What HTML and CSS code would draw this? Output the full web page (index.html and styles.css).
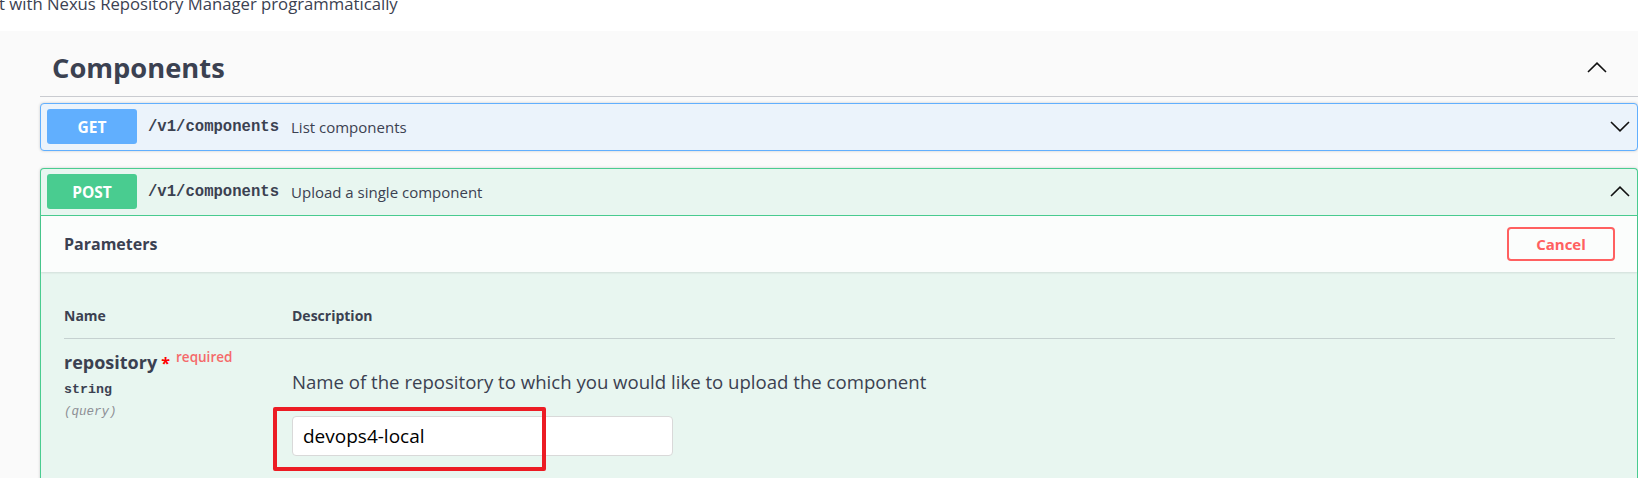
FILE: index.html
```html
<!DOCTYPE html>
<html>
<head>
<meta charset="utf-8">
<link rel="stylesheet" href="styles.css">
</head>
<body>
<div class="topbar"><p class="info-desc">t with Nexus Repository Manager programmatically</p></div>
<div class="main">
  <div class="tag-header">
    <h3 class="tag-title">Components</h3>
    <svg class="chev" width="20" height="11" viewBox="0 0 20 11"><polyline points="1,10 10,1.2 19,10"/></svg>
  </div>

  <div class="opblock get">
    <div class="summary">
      <span class="method">GET</span>
      <span class="path">/v1/components</span>
      <span class="sdesc">List components</span>
      <svg class="chev op-chev" width="20" height="11" viewBox="0 0 20 11"><polyline points="1,1 10,9.8 19,1"/></svg>
    </div>
  </div>

  <div class="opblock post">
    <div class="summary open">
      <span class="method">POST</span>
      <span class="path">/v1/components</span>
      <span class="sdesc">Upload a single component</span>
      <svg class="chev op-chev" width="20" height="11" viewBox="0 0 20 11"><polyline points="1,10 10,1.2 19,10"/></svg>
    </div>
    <div class="section-header">
      <h4 class="sec-title">Parameters</h4>
      <button class="cancel">Cancel</button>
    </div>
    <div class="table">
      <div class="thead">
        <div class="col-name">Name</div>
        <div class="col-desc">Description</div>
      </div>
      <div class="row">
        <div class="col-name">
          <div class="pname">repository<span class="star">&nbsp;*</span><span class="req">required</span></div>
          <div class="ptype">string</div>
          <div class="pin">(query)</div>
        </div>
        <div class="col-desc">
          <p class="pdesc">Name of the repository to which you would like to upload the component</p>
          <div class="field">
            <input class="inp" type="text" value="devops4-local">
            <div class="mark"></div>
          </div>
        </div>
      </div>
    </div>
  </div>
</div>
</body>
</html>
```

FILE: styles.css
```css
html, body {
  margin: 0;
  padding: 0;
  background: #fafafa;
  font-family: "Open Sans", "Liberation Sans", sans-serif;
  color: #3b4151;
  overflow: hidden;
}
.topbar {
  height: 31px;
  background: #ffffff;
  overflow: hidden;
}
.info-desc {
  margin: -8px 0 0 -1px;
  font-size: 16.7px;
  line-height: 23px;
  white-space: nowrap;
}
.main {
  padding-left: 40px;
  padding-top: 0;
  background: #fafafa;
  height: 447px;
  overflow: hidden;
}
.tag-header {
  display: flex;
  align-items: center;
  justify-content: space-between;
  height: 57px;
  padding: 8px 31px 0 12px;
  border-bottom: 1px solid #c9cbd0;
}
.tag-title {
  margin: 0;
  font-size: 27.3px;
  font-weight: 700;
  line-height: 36px;
}
.chev polyline {
  fill: none;
  stroke: #111;
  stroke-width: 1.6;
}
.opblock {
  border: 1px solid;
  border-radius: 4px;
  box-shadow: 0 0 3px rgba(0,0,0,.19);
}
.opblock.get {
  margin-top: 6px;
  background: #ebf3fb;
  border-color: #61affe;
}
.opblock.post {
  margin-top: 17px;
  background: #e8f6f0;
  border-color: #49cc90;
  border-bottom: none;
  border-radius: 4px 4px 0 0;
}
.summary {
  display: flex;
  align-items: center;
  padding: 5px 7px 6px 6px;
}
.summary.open {
  border-bottom: 1px solid #49cc90;
}
.method {
  width: 90px;
  height: 35px;
  border-radius: 3px;
  color: #fff;
  font-weight: 700;
  font-size: 15.5px;
  display: flex;
  align-items: center;
  justify-content: center;
}
.get .method { background: #61affe; }
.post .method { background: #49cc90; }
.path {
  margin-left: 11px;
  font-family: "Liberation Mono", monospace;
  font-weight: 700;
  font-size: 15.6px;
}
.sdesc {
  margin-left: 12px;
  font-size: 15px;
}
.op-chev {
  margin-left: auto;
}
.section-header {
  display: flex;
  align-items: center;
  justify-content: space-between;
  height: 56px;
  padding: 0 22px 0 23px;
  background: rgba(255,255,255,.8);
  box-shadow: 0 1px 2px rgba(0,0,0,.1);
}
.sec-title {
  margin: 0;
  font-size: 16px;
  font-weight: 700;
}
.cancel {
  width: 108px;
  height: 34px;
  border: 2px solid #ff6060;
  border-radius: 4px;
  background: transparent;
  color: #ff6060;
  font-family: "Open Sans", sans-serif;
  font-size: 15px;
  font-weight: 700;
  padding: 0;
}
.table {
  padding: 0 22px 60px 23px;
}
.thead {
  display: flex;
  padding: 34px 0 13px;
  border-bottom: 1px solid rgba(59,65,81,.2);
  font-size: 14px;
  font-weight: 700;
  line-height: 19px;
}
.col-name {
  width: 228px;
  flex: none;
}
.col-desc {
  flex: 1;
}
.row {
  display: flex;
}
.row .col-name {
  padding-top: 11px;
}
.pname {
  font-size: 18px;
  font-weight: 700;
  line-height: 24px;
  white-space: nowrap;
}
.star {
  color: #ff0000;
  font-size: 16px;
}
.req {
  color: #f56a6a;
  font-size: 13.5px;
  font-weight: 600;
  position: relative;
  top: -7px;
  padding-left: 6px;
}
.ptype {
  margin-top: 5px;
  font-family: "Liberation Mono", monospace;
  font-weight: 700;
  font-size: 13.3px;
  line-height: 18px;
}
.pin {
  margin-top: 5px;
  font-family: "Liberation Mono", monospace;
  font-style: italic;
  font-size: 12.5px;
  color: #8d8f95;
  line-height: 17px;
}
.pdesc {
  margin: 30px 0 0;
  font-size: 18.6px;
  line-height: 25px;
}
.field {
  position: relative;
  margin-top: 22px;
  width: 381px;
}
.inp {
  display: block;
  box-sizing: border-box;
  width: 381px;
  height: 40px;
  border: 1px solid #d9d9d9;
  border-radius: 4px;
  background: #fff;
  padding: 0 0 0 10px;
  font-family: "Open Sans", sans-serif;
  font-size: 19px;
  color: #000;
  outline: none;
}
.mark {
  position: absolute;
  left: -19px;
  top: -9px;
  width: 265px;
  height: 56px;
  border: 4px solid #ec1c24;
  border-radius: 2px;
}
```
